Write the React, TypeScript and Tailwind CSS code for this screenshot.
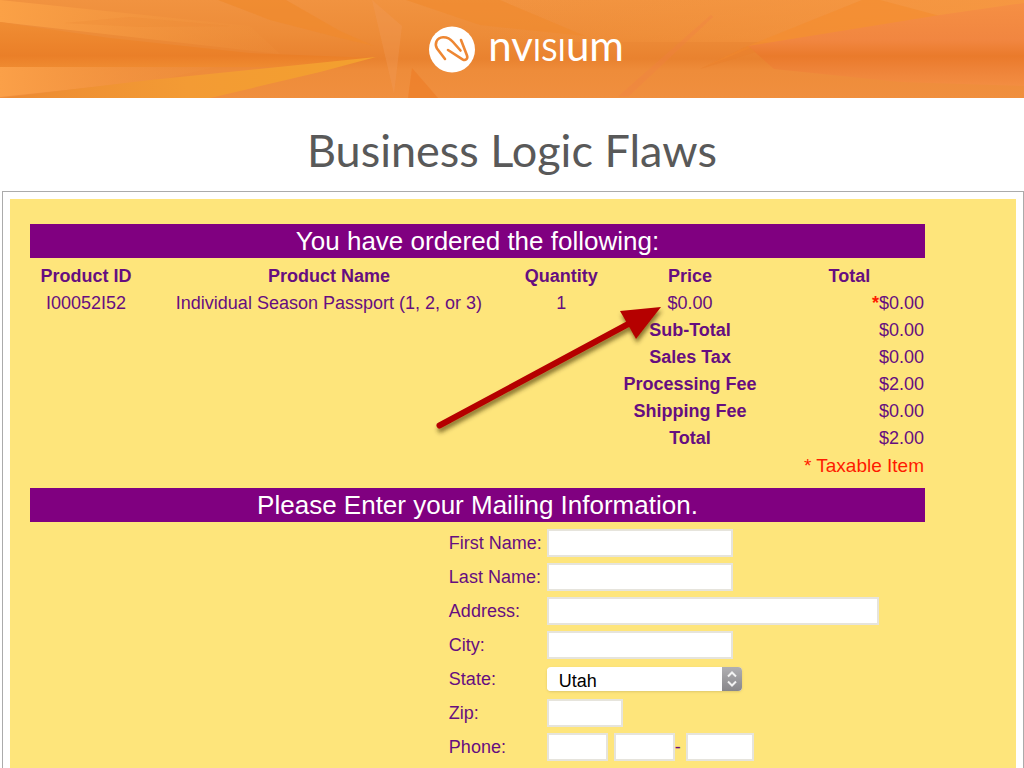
import type { ReactNode } from 'react'
import { clsx } from 'clsx'

const columns = [
  { label: 'Product ID', width: 'w-[12.5%]' },
  { label: 'Product Name', width: 'w-[41.8%]' },
  { label: 'Quantity', width: 'w-[10.1%]' },
  { label: 'Price', width: 'w-[18.7%]' },
  { label: 'Total', width: 'w-[16.9%]' },
]

const summary = [
  { label: 'Sub-Total', amount: '$0.00' },
  { label: 'Sales Tax', amount: '$0.00' },
  { label: 'Processing Fee', amount: '$2.00' },
  { label: 'Shipping Fee', amount: '$0.00' },
  { label: 'Total', amount: '$2.00' },
]

function BannerArt() {
  return (
    <svg
      className="absolute inset-0 h-full w-full"
      viewBox="0 0 1024 98"
      preserveAspectRatio="none"
      aria-hidden="true"
    >
      <defs>
        <linearGradient id="base" x1="0" y1="0" x2="0" y2="1">
          <stop offset="0" stopColor="#f19340" />
          <stop offset="0.35" stopColor="#ed8c38" />
          <stop offset="0.6" stopColor="#e9822f" />
          <stop offset="0.72" stopColor="#ee8c3a" />
          <stop offset="1" stopColor="#f08f3e" />
        </linearGradient>
        <linearGradient id="rayTop" x1="0" y1="0" x2="1" y2="0">
          <stop offset="0" stopColor="#fba146" />
          <stop offset="1" stopColor="#ee903c" stopOpacity="0.2" />
        </linearGradient>
        <linearGradient id="rayMid" x1="0" y1="0" x2="0" y2="1">
          <stop offset="0" stopColor="#f08d33" />
          <stop offset="0.75" stopColor="#ea7f28" />
          <stop offset="1" stopColor="#ef8a30" />
        </linearGradient>
        <linearGradient id="rayLow" x1="0" y1="0" x2="1" y2="0">
          <stop offset="0" stopColor="#fba048" />
          <stop offset="1" stopColor="#ee8f3d" stopOpacity="0.3" />
        </linearGradient>
        <linearGradient id="gold" x1="0" y1="0" x2="1" y2="0">
          <stop offset="0" stopColor="#ec8a33" />
          <stop offset="0.5" stopColor="#f39b34" />
          <stop offset="1" stopColor="#f3a02e" />
        </linearGradient>
        <linearGradient id="wing" x1="0" y1="0" x2="0" y2="1">
          <stop offset="0" stopColor="#f58f44" />
          <stop offset="0.45" stopColor="#f18640" />
          <stop offset="0.64" stopColor="#ea7a2b" />
          <stop offset="0.8" stopColor="#ee8338" />
          <stop offset="1" stopColor="#f38d42" />
        </linearGradient>
        <linearGradient id="rightBase" x1="0" y1="0" x2="1" y2="0">
          <stop offset="0" stopColor="#f59740" stopOpacity="0" />
          <stop offset="1" stopColor="#f79842" stopOpacity="0.8" />
        </linearGradient>
      </defs>
      <rect width="1024" height="98" fill="url(#base)" />
      <rect x="480" width="544" height="42" fill="url(#rightBase)" />
      <polygon points="0,0 250,26 280,54 0,22" fill="url(#rayTop)" />
      <polygon points="65,23 130,17 230,26 140,27" fill="#ea8832" opacity="0.25" />
      <polygon points="0,22 110,38 250,53 376,58 310,67 0,67" fill="url(#rayMid)" />
      <polygon points="0,67 215,67 160,80 0,97" fill="url(#rayLow)" />
      <polygon points="0,98 150,80 376,57 320,72 210,98" fill="url(#gold)" />
      <polygon points="218,0 286,0 340,31 374,46 340,38 270,20" fill="#ef8a2e" opacity="0.75" />
      <polygon points="406,0 500,0 585,36 480,25" fill="#f08a2f" opacity="0.7" />
      <polygon points="372,0 402,26 394,94" fill="#f29b58" opacity="0.35" />
      <polygon points="412,68 438,98 408,98" fill="#ed7f29" opacity="0.75" />
      <polygon points="622,95 712,16 628,95" fill="#f17f45" stroke="#f17f45" strokeWidth="3" opacity="0.3" />
      <polygon points="702,68 748,46 862,0 880,0 940,16 750,48" fill="#f48d30" opacity="0.7" />
      <polygon points="748,46 940,15 1024,3 1024,86 900,82 774,69" fill="url(#wing)" />
      <polygon points="700,69 748,46 756,52" fill="#e9802c" opacity="0.5" />
    </svg>
  )
}

function Logo() {
  return (
    <div className="relative flex items-center gap-3 pl-7 text-white">
      <svg width="48" height="48" viewBox="0 0 48 48" aria-hidden="true">
        <circle cx="24" cy="24.500" r="23" fill="#fff" />
        <path
          d="M17 34 L9 23.500 C6.500 19.500 8 12.500 15 12.200 C19.500 12 22 13.500 25 17 L32.500 25.500 M33 15 L39 30.500 C40.200 34 37.500 36 34.500 34.300 L20 25"
          fill="none"
          stroke="#ee8733"
          strokeWidth="2.600"
          strokeLinecap="round"
          strokeLinejoin="round"
        />
      </svg>
      <div className="flex h-12 items-baseline font-['Lato',sans-serif] text-[42px] leading-10">
        <span>nv</span>
        <span className="text-[30px] uppercase">isi</span>
        <span>um</span>
      </div>
    </div>
  )
}

function SectionBar({ children }: { children: ReactNode }) {
  return (
    <h2 className="bg-[#800080] text-center text-[26px] leading-[34px] text-white">{children}</h2>
  )
}

function Arrow() {
  return (
    <svg
      className="pointer-events-none absolute top-[42px] left-[44.7%] overflow-visible"
      width="240"
      height="140"
      viewBox="0 0 240 140"
      aria-hidden="true"
    >
      <defs>
        <filter id="arrowShadow" x="-10%" y="-10%" width="120%" height="130%">
          <feDropShadow dx="1" dy="4" stdDeviation="2" floodColor="#3a2a00" floodOpacity="0.6" />
        </filter>
      </defs>
      <g filter="url(#arrowShadow)" fill="#b50505">
        <path d="M9.500 125.500 L202 22" stroke="#b50505" strokeWidth="6" strokeLinecap="round" />
        <polygon points="231,7 190,11 206,39" />
      </g>
    </svg>
  )
}

function TextBox({ id, className, label }: { id?: string; className: string; label?: string }) {
  return (
    <input
      id={id}
      type="text"
      aria-label={label}
      className={clsx('h-7 border-2 border-[#e6e4dc] bg-white px-1 text-black outline-none', className)}
    />
  )
}

function Field({ id, label, children }: { id: string; label: string; children: ReactNode }) {
  return (
    <div className="flex h-7 items-center">
      <label htmlFor={id} className="w-[98px] shrink-0">
        {label}
      </label>
      {children}
    </div>
  )
}

function StateSelect() {
  return (
    <div className="relative h-6 w-[195px] overflow-hidden rounded bg-white shadow-sm">
      <select
        id="state"
        defaultValue="Utah"
        className="h-full w-full appearance-none bg-white pl-3 text-lg leading-6 text-black outline-none"
      >
        <option>Utah</option>
      </select>
      <span className="pointer-events-none absolute inset-y-0 right-0 flex w-5 items-center justify-center bg-linear-to-b from-[#b0afb2] to-[#88878b]">
        <svg width="12" height="18" viewBox="0 0 12 18" fill="none" stroke="#f2f2f2" strokeWidth="2">
          <path d="M2 6.500 L6 2.500 L10 6.500 M2 11.500 L6 15.500 L10 11.500" />
        </svg>
      </span>
    </div>
  )
}

export default function App() {
  return (
    <div className="flex min-h-screen flex-col bg-white">
      <header className="relative flex h-[98px] items-center justify-center overflow-hidden">
        <BannerArt />
        <Logo />
      </header>

      <h1 className="pt-6 pb-[13px] text-center font-['Lato',sans-serif] text-[45px] leading-[56px] text-[#595959]">
        Business Logic Flaws
      </h1>

      <main className="ml-0.5 flex flex-1 flex-col border border-b-0 border-[#ababab] bg-white px-[7px] pt-[7px] font-['Liberation_Sans',Arial,sans-serif] text-lg text-[#660e80]">
        <div className="flex-1 bg-[#fee57b] pt-[25px] pr-[91px] pb-1 pl-5">
          <SectionBar>You have ordered the following:</SectionBar>
          <div className="relative pt-[5px] pb-[9px]">
            <table className="w-full table-fixed text-center leading-[27px]">
              <thead>
                <tr>
                  {columns.map((c) => (
                    <th key={c.label} className={clsx('font-bold', c.width)}>
                      {c.label}
                    </th>
                  ))}
                </tr>
              </thead>
              <tbody>
                <tr>
                  <td>I00052I52</td>
                  <td className="whitespace-nowrap">Individual Season Passport (1, 2, or 3)</td>
                  <td>1</td>
                  <td>$0.00</td>
                  <td className="pr-px text-right">
                    <span className="font-bold text-[#ff1a00]">*</span>$0.00
                  </td>
                </tr>
                {summary.map((row) => (
                  <tr key={row.label}>
                    <td colSpan={3} />
                    <th className="font-bold">{row.label}</th>
                    <td className="pr-px text-right">{row.amount}</td>
                  </tr>
                ))}
                <tr>
                  <td colSpan={5} className="pr-px text-right text-[19px] text-[#ff1a00]">
                    * Taxable Item
                  </td>
                </tr>
              </tbody>
            </table>
            <Arrow />
          </div>

          <SectionBar>Please Enter your Mailing Information.</SectionBar>
          <form className="flex flex-col gap-1.5 pt-[7px] pl-[46.8%]">
            <Field id="first" label="First Name:">
              <TextBox id="first" className="w-[186px]" />
            </Field>
            <Field id="last" label="Last Name:">
              <TextBox id="last" className="w-[186px]" />
            </Field>
            <Field id="address" label="Address:">
              <TextBox id="address" className="w-[332px]" />
            </Field>
            <Field id="city" label="City:">
              <TextBox id="city" className="w-[186px]" />
            </Field>
            <Field id="state" label="State:">
              <StateSelect />
            </Field>
            <Field id="zip" label="Zip:">
              <TextBox id="zip" className="w-[76px]" />
            </Field>
            <Field id="phone" label="Phone:">
              <TextBox id="phone" className="w-[61px]" />
              <TextBox className="ml-1.5 w-[61px]" label="Phone prefix" />
              <span className="w-[11px]">-</span>
              <TextBox className="w-[68px]" label="Phone line number" />
            </Field>
          </form>
        </div>
      </main>
    </div>
  )
}
